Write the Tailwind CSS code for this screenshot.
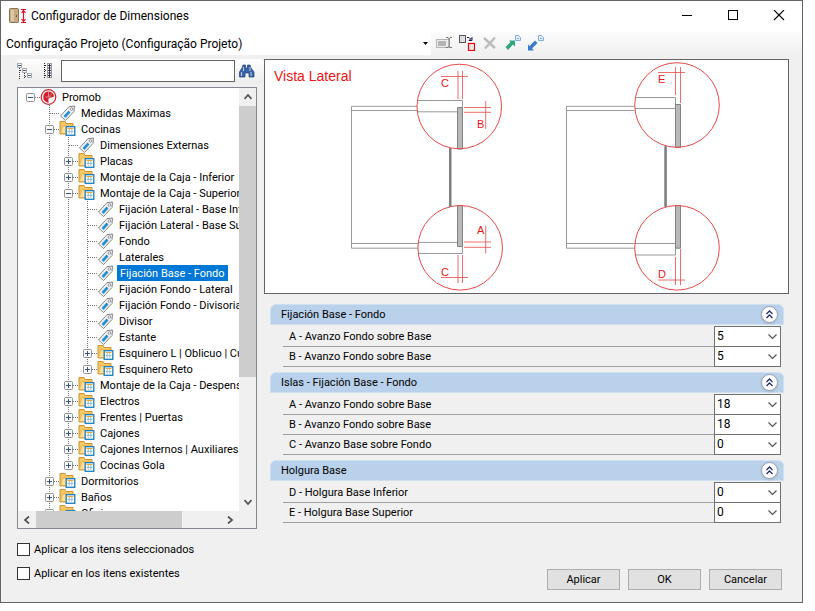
<!DOCTYPE html>
<html lang="es">

<head>
  <meta charset="UTF-8" />
  <meta name="viewport" content="width=device-width, initial-scale=1.0" />
  <title>Configurador de Dimensiones</title>
  <script src="https://cdn.jsdelivr.net/npm/@tailwindcss/browser@4"></script>
</head>

<body class="h-screen bg-white pr-3 pb-2 font-[Roboto,'Liberation_Sans',sans-serif] text-[11px] text-black">
  <div class="flex h-full flex-col overflow-hidden border border-[#646464] bg-[#f0f0f0]">
    <!-- Title bar -->
    <header class="flex h-[30px] shrink-0 items-center bg-white pl-2">
      <svg class="h-4 w-[18px]" viewBox="0 0 18 16">
        <rect x=".5" y=".5" width="9" height="14" rx="1" fill="#c8aa82" stroke="#8d7355" />
        <rect x="2" y="2" width="3" height="11" fill="#dfc8a6" />
        <rect x="7" y="7" width="1" height="2" fill="#6f5a40" />
        <path d="M12 1.500h5M12 14.500h5M14.500 2v12M12.500 5l2-2.500 2 2.500M12.500 11l2 2.500 2-2.500" fill="none" stroke="#d8142c" stroke-width="1.200" />
      </svg>
      <h1 class="ml-1 flex-1 text-[12px]">Configurador de Dimensiones</h1>
      <button aria-label="Minimizar" class="flex h-full w-[46px] items-center justify-center">
        <svg class="h-3 w-3" viewBox="0 0 12 12"><path d="M1 5.500h10" stroke="#000" /></svg>
      </button>
      <button aria-label="Maximizar" class="flex h-full w-[46px] items-center justify-center">
        <svg class="h-3 w-3" viewBox="0 0 12 12"><rect x="1.500" y=".5" width="9" height="9" fill="none" stroke="#000" /></svg>
      </button>
      <button aria-label="Cerrar" class="flex h-full w-[46px] items-center justify-center">
        <svg class="h-3 w-3" viewBox="0 0 12 12"><path d="M1 0l10 10M11 0L1 10" stroke="#000" stroke-width="1.100" /></svg>
      </button>
    </header>

    <!-- Toolbar -->
    <div class="flex h-6 shrink-0 items-center bg-linear-to-b from-[#fdfdfd] to-[#f0f0f0]">
      <div class="relative h-full w-[430px] bg-white">
        <select aria-label="Configuración" class="h-full w-full appearance-none pt-px pl-[5px] text-[12px]">
          <option>Configuração Projeto (Configuração Projeto)</option>
        </select>
        <svg class="pointer-events-none absolute top-[11px] right-[3px] h-[3px] w-[5px]" viewBox="0 0 5 3"><path d="M0 0h5L2.500 3z" /></svg>
      </div>
      <div class="flex items-center gap-[7px] pl-[5px]">
        <button aria-label="Renombrar">
          <svg class="h-4 w-4" viewBox="0 0 16 16">
            <rect x=".5" y="4.500" width="13" height="8" fill="#ececec" stroke="#b5b5b5" />
            <rect x="2" y="6" width="8" height="5" fill="#b4b4b4" />
            <path d="M10 2.500h2l1 1 1-1h2M13 3v9M10 12.500h2l1-1 1 1h2" fill="none" stroke="#777" />
          </svg>
        </button>
        <button aria-label="Reemplazar">
          <svg class="h-4 w-4" viewBox="0 0 16 16">
            <rect x=".5" y=".5" width="6" height="7" fill="#dcdce4" stroke="#5f5357" />
            <path d="M8 2.500h2l2 2M13 2.500v3H10z" fill="none" stroke="#151a68" />
            <rect x="9.500" y="8.500" width="6" height="7" fill="#e8e8f0" stroke="#f00000" stroke-width="1.200" />
          </svg>
        </button>
        <button aria-label="Eliminar">
          <svg class="h-4 w-4" viewBox="0 0 16 16"><path d="M2 3l11 10M13 2.500L3 13.500" stroke="#bcbcbc" stroke-width="2.400" /></svg>
        </button>
        <button aria-label="Exportar">
          <svg class="h-4 w-4" viewBox="0 0 16 16">
            <path d="M.5 12l5-5L4 5.500h6v6L8 9.500l-5 5.500z" fill="#2fa67c" />
            <path d="M10.500 .5h3l2 2v3h-5z" fill="#e1effc" stroke="#80aede" /><path d="M12 3.500h2" stroke="#80aede" />
          </svg>
        </button>
        <button aria-label="Importar">
          <svg class="h-4 w-4" viewBox="0 0 16 16">
            <path d="M0 15.500V9.500L1.500 11l5.500-5.500L9.500 8 4 13.500l2 2z" fill="#3c7bcc" />
            <path d="M10.500 .5h3l2 2v3h-5z" fill="#e1effc" stroke="#80aede" /><path d="M12 3.500h2" stroke="#80aede" />
          </svg>
        </button>
      </div>
    </div>

    <main class="flex min-h-0 flex-1">
      <!-- Left column -->
      <section class="flex w-[263px] shrink-0 flex-col pt-1 pb-[17px] pl-4">
        <div class="flex h-6 shrink-0 items-center rounded bg-linear-to-b from-white to-[#ececec]">
          <button aria-label="Expandir" class="mr-[10px]">
            <svg class="h-4 w-4" viewBox="0 0 16 16">
              <path d="M2.500 5v11M7.500 10v5M3 7.500h3M8 13.500h3" stroke="#333" stroke-dasharray="1 1" />
              <g fill="#fff" stroke="#a4acb6"><rect x=".5" y=".5" width="4" height="4" /><rect x="5.500" y="5.500" width="4" height="4" /><rect x="10.500" y="10.500" width="4" height="4" /></g>
              <path d="M1 2.500h3M6 7.500h3M11 12.500h3" stroke="#4b5c70" />
            </svg>
          </button>
          <button aria-label="Contraer" class="mr-[2px]">
            <svg class="h-4 w-4" viewBox="0 0 16 16">
              <path d="M1.500 0v16M2 2.500h3M2 7.500h3M2 12.500h3" stroke="#222" stroke-dasharray="1 1" />
              <g fill="#fff" stroke="#99a"><rect x="4.500" y=".5" width="4" height="4" /><rect x="4.500" y="5.500" width="4" height="4" /><rect x="4.500" y="10.500" width="4" height="4" /></g>
              <path d="M6.500 1v14M5 2.500h3M5 7.500h3M5 12.500h3" stroke="#334" />
            </svg>
          </button>
          <input aria-label="Buscar" type="text" class="h-[22px] w-[174px] border border-[#646464] bg-white px-1 outline-none" />
          <button aria-label="Buscar siguiente" class="ml-1">
            <svg class="h-4 w-4" viewBox="0 0 16 16">
              <path d="M4 2h2.500v3h2V2H11l1 3 3 4v5h-5v-4H6v4H.5V9L3 5z" fill="#3c62a8" stroke="#1f3d7c" stroke-width=".7" />
              <path d="M4.500 4v4M11 4v4M2.500 9v4M12 9v4" stroke="#b5cdf0" />
            </svg>
          </button>
        </div>

        <!-- Tree -->
        <div class="mt-1 grid min-h-0 w-60 flex-1 grid-cols-[minmax(0,1fr)_17px] grid-rows-[minmax(0,1fr)_17px] border border-[#828790] bg-white">
          <div class="overflow-hidden pt-px pl-[3px]">
            <ul id="tree"></ul>
          </div>
          <div class="flex flex-col bg-[#f0f0f0]">
            <button aria-label="Subir" class="flex h-[18px] items-center justify-center">
              <svg class="h-2 w-2" viewBox="0 0 8 8"><path d="M.5 6L4 2l3.500 4" fill="none" stroke="#505050" stroke-width="1.700" /></svg>
            </button>
            <div class="flex-1"><div class="h-[70%] bg-[#cdcdcd]"></div></div>
            <button aria-label="Bajar" class="flex h-[18px] items-center justify-center">
              <svg class="h-2 w-2" viewBox="0 0 8 8"><path d="M.5 2L4 6l3.500-4" fill="none" stroke="#505050" stroke-width="1.700" /></svg>
            </button>
          </div>
          <div class="flex bg-[#f0f0f0]">
            <button aria-label="Izquierda" class="flex w-[18px] items-center justify-center">
              <svg class="h-2 w-2" viewBox="0 0 8 8"><path d="M6 .5L2 4l4 3.500" fill="none" stroke="#505050" stroke-width="1.700" /></svg>
            </button>
            <div class="flex-1"><div class="h-full w-[79%] bg-[#cdcdcd]"></div></div>
            <button aria-label="Derecha" class="flex w-[18px] items-center justify-center">
              <svg class="h-2 w-2" viewBox="0 0 8 8"><path d="M2 .5L6 4 2 7.500" fill="none" stroke="#505050" stroke-width="1.700" /></svg>
            </button>
          </div>
          <div class="bg-[#f0f0f0]"></div>
        </div>

        <div class="mt-2 flex shrink-0 flex-col">
          <label class="flex h-6 items-center gap-1">
            <input type="checkbox" class="h-[13px] w-[13px] appearance-none border border-[#333] bg-white checked:bg-[#0078d7]" />
            <span class="pt-[2px]">Aplicar a los itens seleccionados</span>
          </label>
          <label class="flex h-6 items-center gap-1">
            <input type="checkbox" class="h-[13px] w-[13px] appearance-none border border-[#333] bg-white checked:bg-[#0078d7]" />
            <span class="pt-[2px]">Aplicar en los itens existentes</span>
          </label>
        </div>
      </section>

      <!-- Right column -->
      <section class="flex min-w-0 flex-1 flex-col pt-1 pr-[13px] pb-3">
        <div class="shrink-0 border border-[#646464] bg-white">
          <svg class="h-[233px] w-full" viewBox="265 60 523 233" font-family="Liberation Sans, Arial, sans-serif">
            <text x="274" y="81" font-size="14" fill="#f01414">Vista Lateral</text>
            <!-- Cabinet outlines -->
            <g fill="none" stroke="#8e8e8e" stroke-width=".9">
              <path d="M417 106.300H351.500V248.200H418M351.500 110.500H417M351.500 243.500H418" />
              <path d="M417.500 100.500H462.500V107.500M417.500 111.800H457.500M418 242.400H457.500M418 253.500H462.500V246.500" />
              <path d="M634.500 106.300H566.500V248.200H634.500M566.500 110.500H634.500M566.500 243.500H675.500" />
              <path d="M635 97.500H675.500V105M635 108.500H675.500M635 255H675.500V248" />
            </g>
            <!-- Back panels -->
            <g fill="#b9b9b9" stroke="#777" stroke-width=".9">
              <path d="M457.500 107.500h5V149h-5zM457.500 205.500h5V246.500h-5zM675.500 104.500h5V147.500h-5zM675.500 205.500h5V248.200h-5z" />
              <path d="M449.500 148.500h1.500V206.500h-1.500zM664.800 146.500h1.500V206.500h-1.500z" fill="#888" />
            </g>
            <g fill="none" stroke="#e84a4a" stroke-width="1">
              <circle cx="459.300" cy="106.500" r="42.300" />
              <circle cx="460.200" cy="247.800" r="42.300" />
              <circle cx="677" cy="105" r="42.300" />
              <circle cx="677" cy="247.800" r="42.300" />
              <g stroke-width=".8">
                <path d="M441 76.500h27M458 71v28M462.500 71v28M464 107.500h27M464 112.300h27M485.700 101v28" />
                <path d="M464 242h27M464 247.300h27M485.700 225.500v28M458 255v28M462.500 255v28M441 277.500h27" />
                <path d="M658 72.500h27M675.500 67v28M680.500 67v36M658 280h27M675.500 257v28M680.500 249v36" />
              </g>
            </g>
            <g fill="#f01414" font-size="11">
              <text x="441" y="87">C</text>
              <text x="477" y="128">B</text>
              <text x="477" y="234">A</text>
              <text x="441" y="276">C</text>
              <text x="658" y="83">E</text>
              <text x="658" y="278">D</text>
            </g>
          </svg>
        </div>

        <div id="groups" class="mt-[10px] flex flex-col gap-[5px] pr-[5px] pl-[6px]"></div>

        <div class="mt-auto flex justify-end gap-2 pr-[7px]">
          <button class="h-[21px] w-[73px] border border-[#adadad] bg-[#e1e1e1] pt-px">Aplicar</button>
          <button class="h-[21px] w-[73px] border border-[#adadad] bg-[#e1e1e1] pt-px">OK</button>
          <button class="h-[21px] w-[73px] border border-[#adadad] bg-[#e1e1e1] pt-px">Cancelar</button>
        </div>
      </section>
    </main>
  </div>

  <script>
    // [guide columns, box, icon, label]
    // guides: "." empty, "|" line, "t" branch, "l" last branch
    const nodes = [
      [".", "-", "root", "Promob"],
      [".t", "", "tag", "Medidas Máximas"],
      [".t", "-", "folder", "Cocinas"],
      [".|t", "", "tag", "Dimensiones Externas"],
      [".|t", "+", "folder", "Placas"],
      [".|t", "+", "folder", "Montaje de la Caja - Inferior"],
      [".|t", "-", "folder", "Montaje de la Caja - Superior"],
      [".||t", "", "tag", "Fijación Lateral - Base Inf"],
      [".||t", "", "tag", "Fijación Lateral - Base Su"],
      [".||t", "", "tag", "Fondo"],
      [".||t", "", "tag", "Laterales"],
      [".||t", "", "tag", "Fijación Base - Fondo"],
      [".||t", "", "tag", "Fijación Fondo - Lateral"],
      [".||t", "", "tag", "Fijación Fondo - Divisoria"],
      [".||t", "", "tag", "Divisor"],
      [".||t", "", "tag", "Estante"],
      [".||t", "+", "folder", "Esquinero L | Oblicuo | Cu"],
      [".||l", "+", "folder", "Esquinero Reto"],
      [".|t", "+", "folder", "Montaje de la Caja - Despens"],
      [".|t", "+", "folder", "Electros"],
      [".|t", "+", "folder", "Frentes | Puertas"],
      [".|t", "+", "folder", "Cajones"],
      [".|t", "+", "folder", "Cajones Internos | Auxiliares"],
      [".|l", "+", "folder", "Cocinas Gola"],
      [".t", "+", "folder", "Dormitorios"],
      [".t", "+", "folder", "Baños"],
      [".t", "+", "folder", "Oficinas"]
    ];
    const selected = "Fijación Base - Fondo";

    const icons = {
      root: `<circle cx="8" cy="8" r="7.300" fill="#fff" stroke="#d3202e" stroke-width="1.200"/>
        <path d="M8 2.500a5.500 5.500 0 0 0-2 10.500l2 1V9.500l3-1 2.500-1A5.500 5.500 0 0 0 8 2.500z" fill="#d3202e"/>
        <path d="M8 3v5l3-3M8 8H5M8 8l3 0" stroke="#f3b0b5" stroke-width=".7" fill="none"/>`,
      tag: `<path d="M1 11L9.500 1.700 15 1l-.5 5.500L6 15.500z" fill="#f4f4f4" stroke="#858585"/>
        <path d="M4 11l5-5.500L11 7.500 6 13z" fill="#2492d6"/>
        <circle cx="12" cy="4" r="1.300" fill="#fff" stroke="#777" stroke-width=".8"/>`,
      folder: `<path d="M.5 13V.5h5l1 2h7V13z" fill="#f7c965" stroke="#cf9233"/>
        <path d="M1 12.500L3 5h11v7.500z" fill="#fbdf95" stroke="#dba546" stroke-width=".7"/>
        <rect x="6.700" y="5.700" width="8.600" height="8.600" fill="#fff" stroke="#1a7fbf" stroke-width="1.300"/>
        <path d="M8 7.500h6" stroke="#f2a43a"/><path d="M8 10.500h6M9.700 8v5M12.300 8v5" stroke="#9cc0dc"/>`
    };

    function guide(type, isOwn, box) {
      let s = "";
      if (type === "|" || type === "t") s += `<path d="M9.500 0V16" stroke="#777" stroke-dasharray="1 1"/>`;
      if (type === "l") s += `<path d="M9.500 0V8" stroke="#777" stroke-dasharray="1 1"/>`;
      if (isOwn) s += `<path d="M10 8.500H19" stroke="#777" stroke-dasharray="1 1"/>`;
      if (box) {
        s += `<rect x="5.500" y="4.500" width="8" height="8" rx="1" fill="#fafafa" stroke="#919191"/><path d="M7 8.500h5" stroke="#35538f"/>`;
        if (box === "+") s += `<path d="M9.500 6v5" stroke="#35538f"/>`;
      }
      return `<svg class="h-4 w-[19px] shrink-0" viewBox="0 0 19 16">${s}</svg>`;
    }

    document.getElementById("tree").innerHTML = nodes.map(([guides, box, icon, label]) => {
      const cols = [...guides].map((g, i) => {
        const own = i === guides.length - 1;
        return guide(g, own, own ? box : "");
      }).join("");
      const text = label === selected
        ? `<span class="ml-[2px] bg-[#0078d7] px-[3px] pt-[2px] leading-[14px] text-white">${label}</span>`
        : `<span class="pt-[2px] pl-1 leading-[14px]">${label}</span>`;
      return `<li class="flex h-4 items-center whitespace-nowrap">${cols}<svg class="mr-px h-4 w-[17px] shrink-0" viewBox="0 0 16 16">${icons[icon]}</svg>${text}</li>`;
    }).join("");

    const groups = [
      { title: "Fijación Base - Fondo", rows: [["A - Avanzo Fondo sobre Base", 5], ["B - Avanzo Fondo sobre Base", 5]] },
      { title: "Islas - Fijación Base - Fondo", rows: [["A - Avanzo Fondo sobre Base", 18], ["B - Avanzo Fondo sobre Base", 18], ["C - Avanzo Base sobre Fondo", 0]] },
      { title: "Holgura Base", rows: [["D - Holgura Base Inferior", 0], ["E - Holgura Base Superior", 0]] }
    ];

    document.getElementById("groups").innerHTML = groups.map((group, g) => `
      <div>
        <div class="flex h-[21px] items-center justify-between rounded-t-md border border-[#cfe0f1] bg-[#b9d1ea] pr-[5px] pl-[10px]">
          <h2 class="pt-px">${group.title}</h2>
          <button aria-label="Contraer ${group.title}" class="flex h-[17px] w-[17px] items-center justify-center rounded-full border border-[#9a9fb0] bg-white shadow-sm">
            <svg class="h-[9px] w-[9px]" viewBox="0 0 9 9"><path d="M1.500 4l3-3 3 3M1.500 8l3-3 3 3" fill="none" stroke="#1f2f6b" stroke-width="1.300"/></svg>
          </button>
        </div>
        <div class="mt-px mr-[3px] ml-[13px] pb-px">
          ${group.rows.map(([label, value], r) => `
            <div class="flex h-5">
              <label for="v${g}-${r}" class="-mb-px flex flex-1 items-center border-b border-[#a0a0a0] pt-[2px] pl-[6px]">${label}</label>
              <div class="relative -mb-px w-[67px]">
                <select id="v${g}-${r}" class="h-full w-full appearance-none border border-[#707070] bg-white pb-[2px] pl-[2px] text-[12px]"><option>${value}</option></select>
                <svg class="pointer-events-none absolute top-2 right-1 h-[6px] w-[9px]" viewBox="0 0 9 6"><path d="M.5 .5l4 4 4-4" fill="none" stroke="#555" stroke-width="1.200"/></svg>
              </div>
            </div>`).join("")}
        </div>
      </div>`).join("");
  </script>
</body>

</html>
